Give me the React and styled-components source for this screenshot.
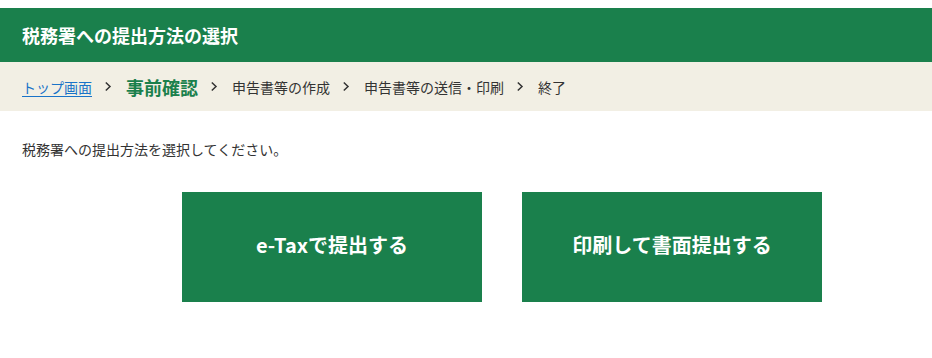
import React from 'react';
import styled, { createGlobalStyle } from 'styled-components';

const GlobalStyle = createGlobalStyle`
  body {
    margin: 0;
    background: #fff;
    font-family: "Noto Sans CJK JP", "Noto Sans", sans-serif;
    color: #333;
  }
`;

const steps = [
  { label: 'トップ画面', kind: 'link' },
  { label: '事前確認', kind: 'current' },
  { label: '申告書等の作成' },
  { label: '申告書等の送信・印刷' },
  { label: '終了' },
];

function Chevron() {
  return (
    <svg width="8" height="11" viewBox="0 0 8 11">
      <path d="M1.8 1.5 L6 5.5 L1.8 9.5" fill="none" stroke="#333" strokeWidth="1.5" />
    </svg>
  );
}

export default function App() {
  return (
    <Page>
      <GlobalStyle />
      <Header>
        <Title>税務署への提出方法の選択</Title>
      </Header>

      <Breadcrumb>
        {steps.map((step, i) => (
          <React.Fragment key={step.label}>
            {i > 0 && (
              <Sep>
                <Chevron />
              </Sep>
            )}
            {step.kind === 'link' ? (
              <CrumbLink href="#">{step.label}</CrumbLink>
            ) : (
              <Crumb current={step.kind === 'current'}>{step.label}</Crumb>
            )}
          </React.Fragment>
        ))}
      </Breadcrumb>

      <Content>
        <Lead>税務署への提出方法を選択してください。</Lead>
        <Choices>
          <ChoiceButton>e-Taxで提出する</ChoiceButton>
          <ChoiceButton>印刷して書面提出する</ChoiceButton>
        </Choices>
      </Content>
    </Page>
  );
}

const Page = styled.div`
  padding-top: 8px;
`;

const Header = styled.div`
  background-color: #1a804c;
  height: 54px;
  display: flex;
  align-items: center;
  padding: 0 22px;
`;

const Title = styled.h1`
  margin: 0;
  color: #fff;
  font-size: 18px;
  font-weight: 700;
`;

const Breadcrumb = styled.nav`
  background-color: #f2efe4;
  height: 49px;
  display: flex;
  align-items: center;
  padding: 0 22px;
  font-size: 14px;
`;

const Sep = styled.span`
  display: inline-flex;
  align-items: center;
  margin: 0 14px 0 12px;
`;

const CrumbLink = styled.a`
  color: #1a73c8;
  text-decoration: underline;
  text-underline-offset: 3px;
`;

const Crumb = styled.span`
  color: ${(p) => (p.current ? '#1a804c' : '#333')};
  font-size: ${(p) => (p.current ? '18px' : '14px')};
  font-weight: ${(p) => (p.current ? 700 : 400)};
`;

const Content = styled.div`
  padding: 28px 22px 0;
`;

const Lead = styled.p`
  margin: 0;
  font-size: 14px;
  line-height: 20px;
  color: #333;
`;

const Choices = styled.div`
  display: flex;
  gap: 40px;
  margin-top: 33px;
  padding-left: 160px;
`;

const ChoiceButton = styled.button`
  width: 300px;
  height: 110px;
  padding: 0 0 5px;
  border: none;
  background-color: #1a804c;
  color: #fff;
  font-family: inherit;
  font-size: 20px;
  font-weight: 700;
  cursor: pointer;
`;
